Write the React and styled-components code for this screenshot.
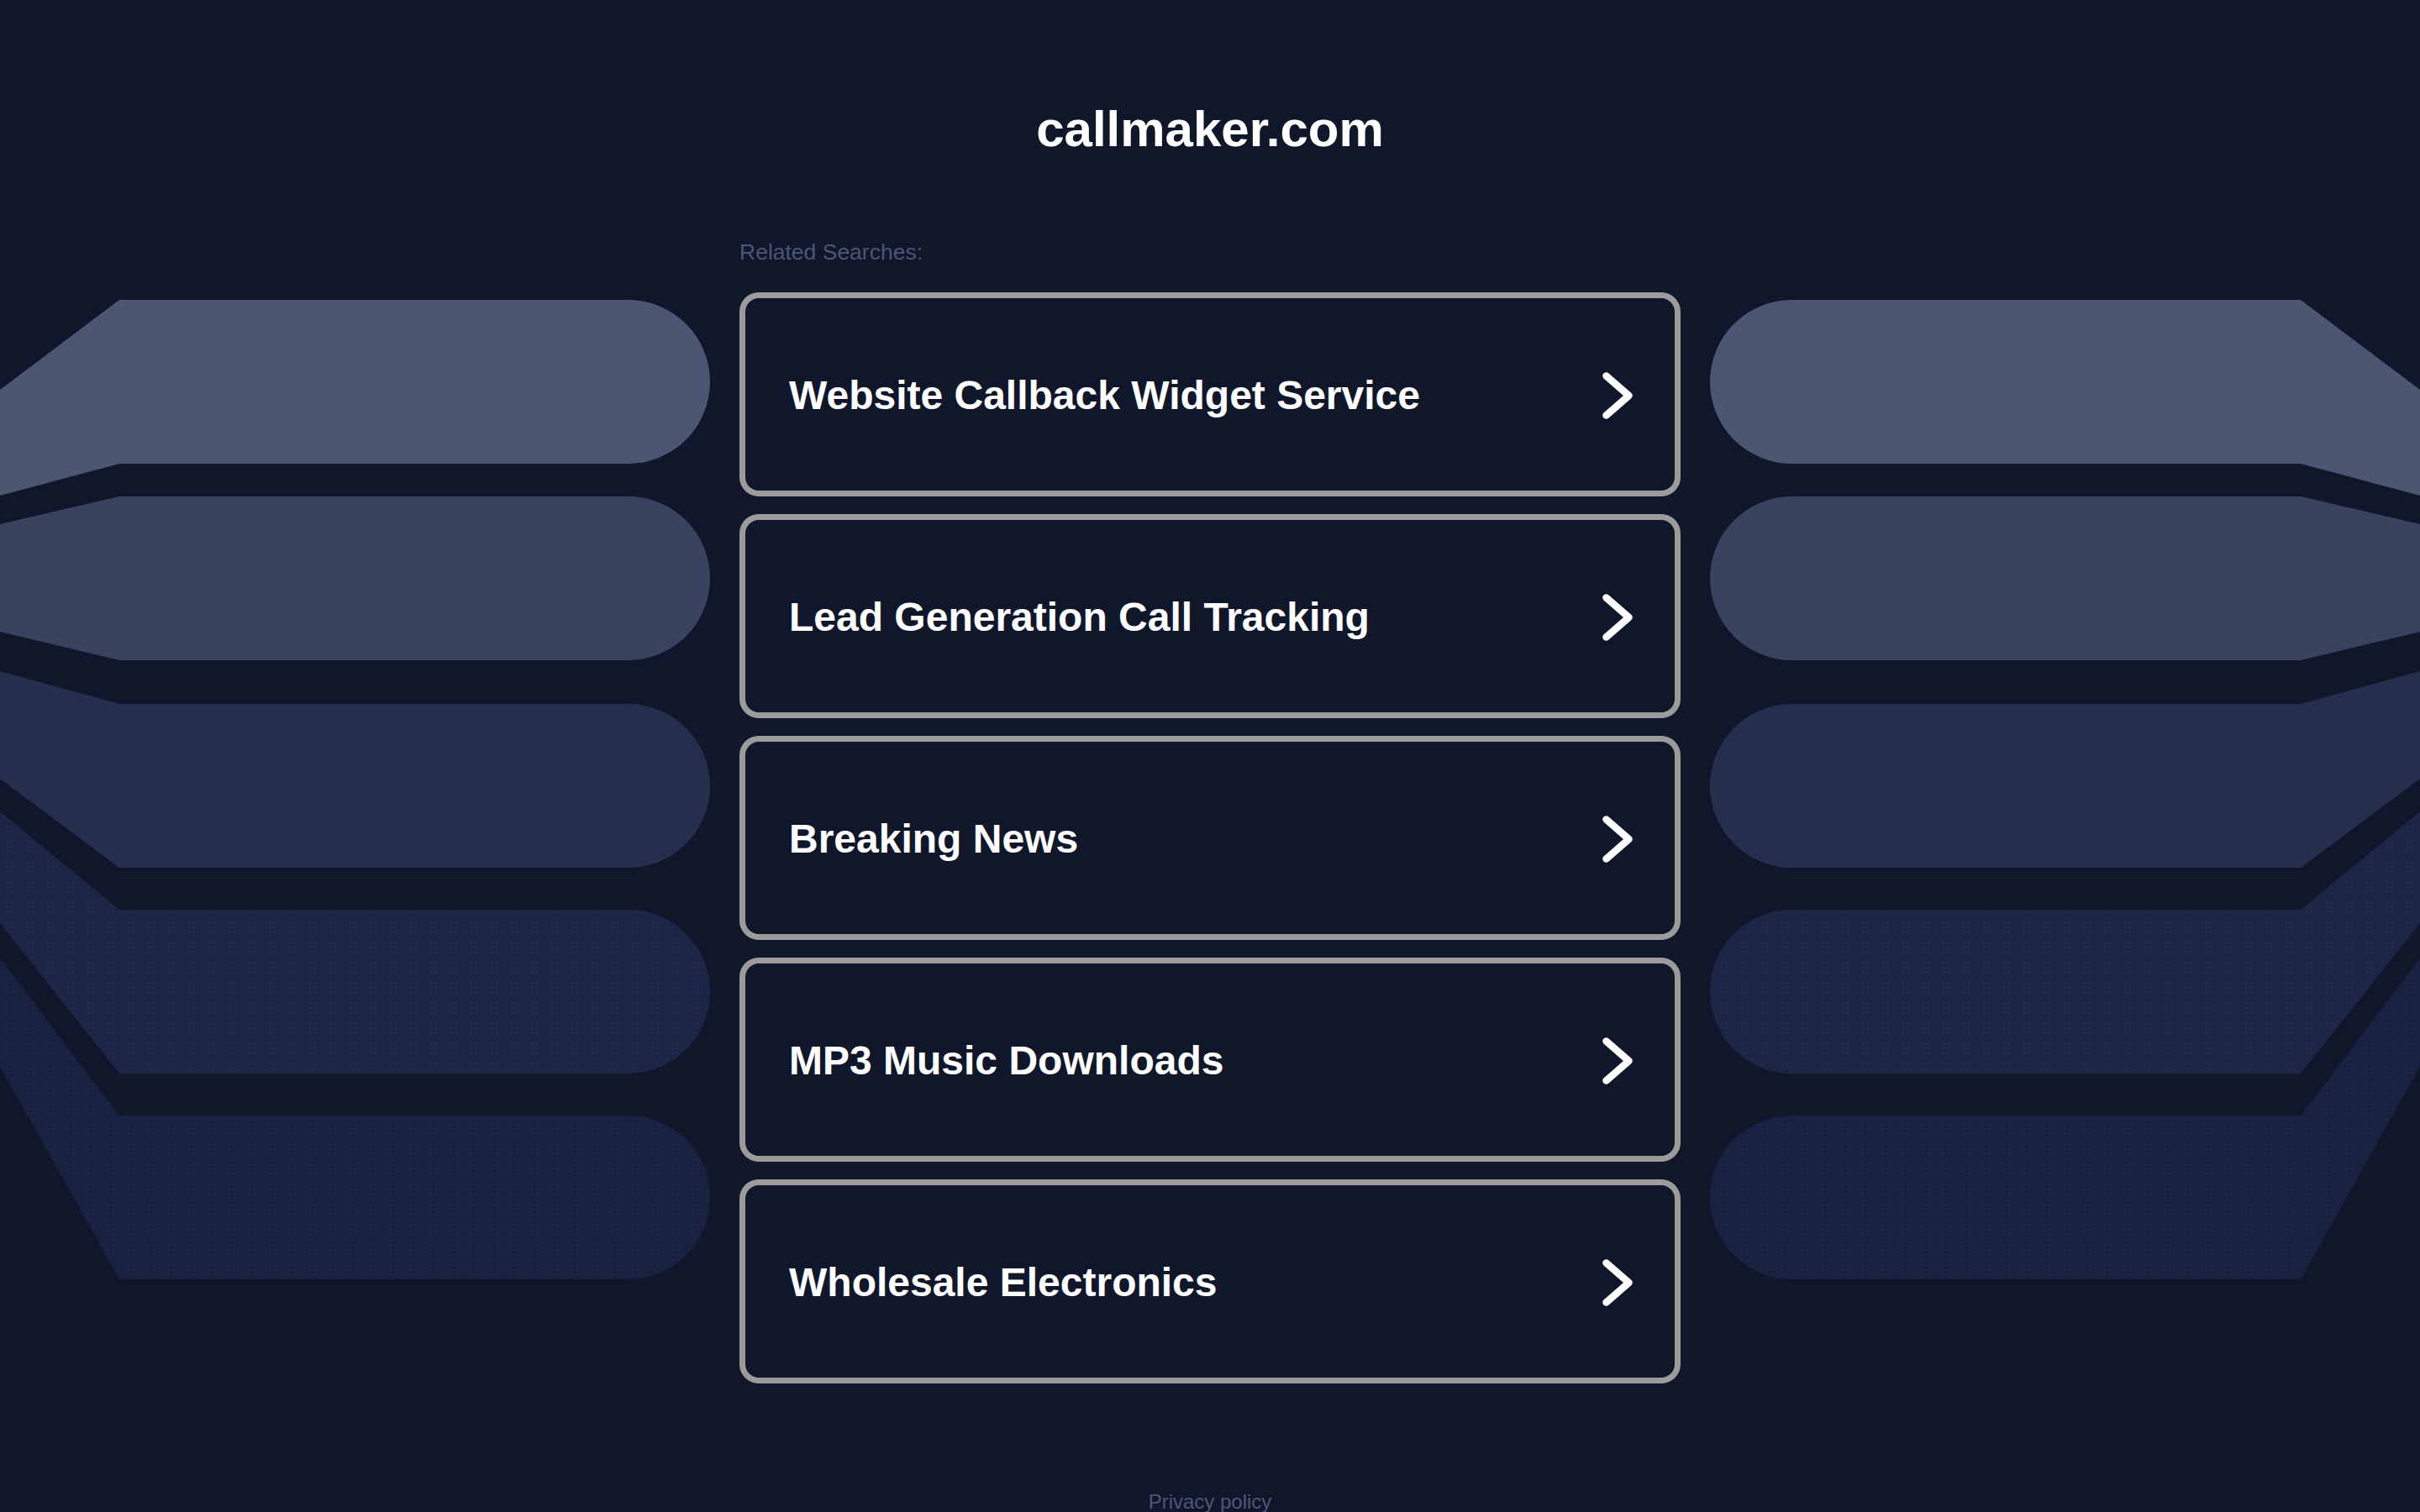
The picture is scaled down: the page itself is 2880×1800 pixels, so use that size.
import React from 'react'
import styled, { createGlobalStyle } from 'styled-components'

const GlobalStyle = createGlobalStyle`
  html, body {
    margin: 0;
    padding: 0;
    background: #11172b;
  }
  * {
    box-sizing: border-box;
  }
`

const searches = [
  'Website Callback Widget Service',
  'Lead Generation Call Tracking',
  'Breaking News',
  'MP3 Music Downloads',
  'Wholesale Electronics',
]

// left-side bars: top edge, bottom edge, where the slanted ends meet x=0
const bars = [
  { top: 0, topLeft: 107, bottomLeft: 233, fill: '#4b5673' },
  { top: 234, topLeft: 267, bottomLeft: 395, fill: '#394360' },
  { top: 481, topLeft: 442, bottomLeft: 570, fill: '#252e4c' },
  { top: 726, topLeft: 609, bottomLeft: 742, fill: '#1c2545', dotted: true },
  { top: 971, topLeft: 784, bottomLeft: 913, fill: '#192141', dotted: true },
]

const BAR_H = 195

const Page = styled.div`
  min-height: 100vh;
  padding-top: 120px;
  background: #11172b;
  font-family: 'Liberation Sans', Arial, sans-serif;
  color: #fff;
`

const Title = styled.h1`
  margin: 0;
  font-size: 60px;
  line-height: 68px;
  font-weight: 700;
  text-align: center;
  color: #fff;
`

const Row = styled.div`
  display: grid;
  grid-template-columns: 1fr 1120px 1fr;
  align-items: start;
  margin-top: 97px;
`

const DecorSvg = styled.svg`
  display: block;
  margin-top: 72px;
  justify-self: ${({ $flip }) => ($flip ? 'end' : 'start')};
  transform: ${({ $flip }) => ($flip ? 'scaleX(-1)' : 'none')};
`

const Main = styled.div`
  display: flex;
  flex-direction: column;
`

const Label = styled.div`
  font-size: 26.5px;
  line-height: 30px;
  color: #4b5574;
  margin-bottom: 33px;
`

const List = styled.div`
  display: flex;
  flex-direction: column;
  gap: 21px;
`

const Card = styled.a`
  display: flex;
  align-items: center;
  justify-content: space-between;
  height: 243px;
  padding: 2px 50px 0 52px;
  border: 7px solid #9b9b9b;
  border-radius: 23px;
  background: #11172b;
  color: #fff;
  text-decoration: none;
`

const CardText = styled.span`
  font-size: 48px;
  line-height: 56px;
  font-weight: 700;
`

const Footer = styled.div`
  margin-top: 127px;
  text-align: center;
  font-size: 24px;
  line-height: 28px;
  color: #4d5677;
`

const Chevron = () => (
  <svg width="36" height="56" viewBox="0 0 36 56">
    <polyline
      points="4.5,4.5 31.5,28 4.5,51.5"
      fill="none"
      stroke="#fff"
      strokeWidth="8.5"
      strokeLinecap="round"
      strokeLinejoin="round"
    />
  </svg>
)

const barPath = ({ top, topLeft, bottomLeft }) => {
  const bottom = top + BAR_H
  const r = BAR_H / 2
  return `M0 ${topLeft} L142 ${top} L${845 - r} ${top} A${r} ${r} 0 0 1 ${845 - r} ${bottom} L142 ${bottom} L0 ${bottomLeft} Z`
}

const Decor = ({ flip, id }) => (
  <DecorSvg $flip={flip} width="845" height="1166" viewBox="0 0 845 1166">
    <defs>
      <pattern id={id} width="6" height="6" patternUnits="userSpaceOnUse">
        <circle cx="3" cy="3" r="0.9" fill="rgba(255,255,255,0.035)" />
      </pattern>
    </defs>
    {bars.map((bar, i) => (
      <g key={i}>
        <path d={barPath(bar)} fill={bar.fill} />
        {bar.dotted && <path d={barPath(bar)} fill={`url(#${id})`} />}
      </g>
    ))}
  </DecorSvg>
)

const App = () => (
  <Page>
    <GlobalStyle />
    <Title>callmaker.com</Title>
    <Row>
      <Decor id="dots-left" />
      <Main>
        <Label>Related Searches:</Label>
        <List>
          {searches.map((s) => (
            <Card key={s} href="#">
              <CardText>{s}</CardText>
              <Chevron />
            </Card>
          ))}
        </List>
      </Main>
      <Decor id="dots-right" flip />
    </Row>
    <Footer>Privacy policy</Footer>
  </Page>
)

export default App
